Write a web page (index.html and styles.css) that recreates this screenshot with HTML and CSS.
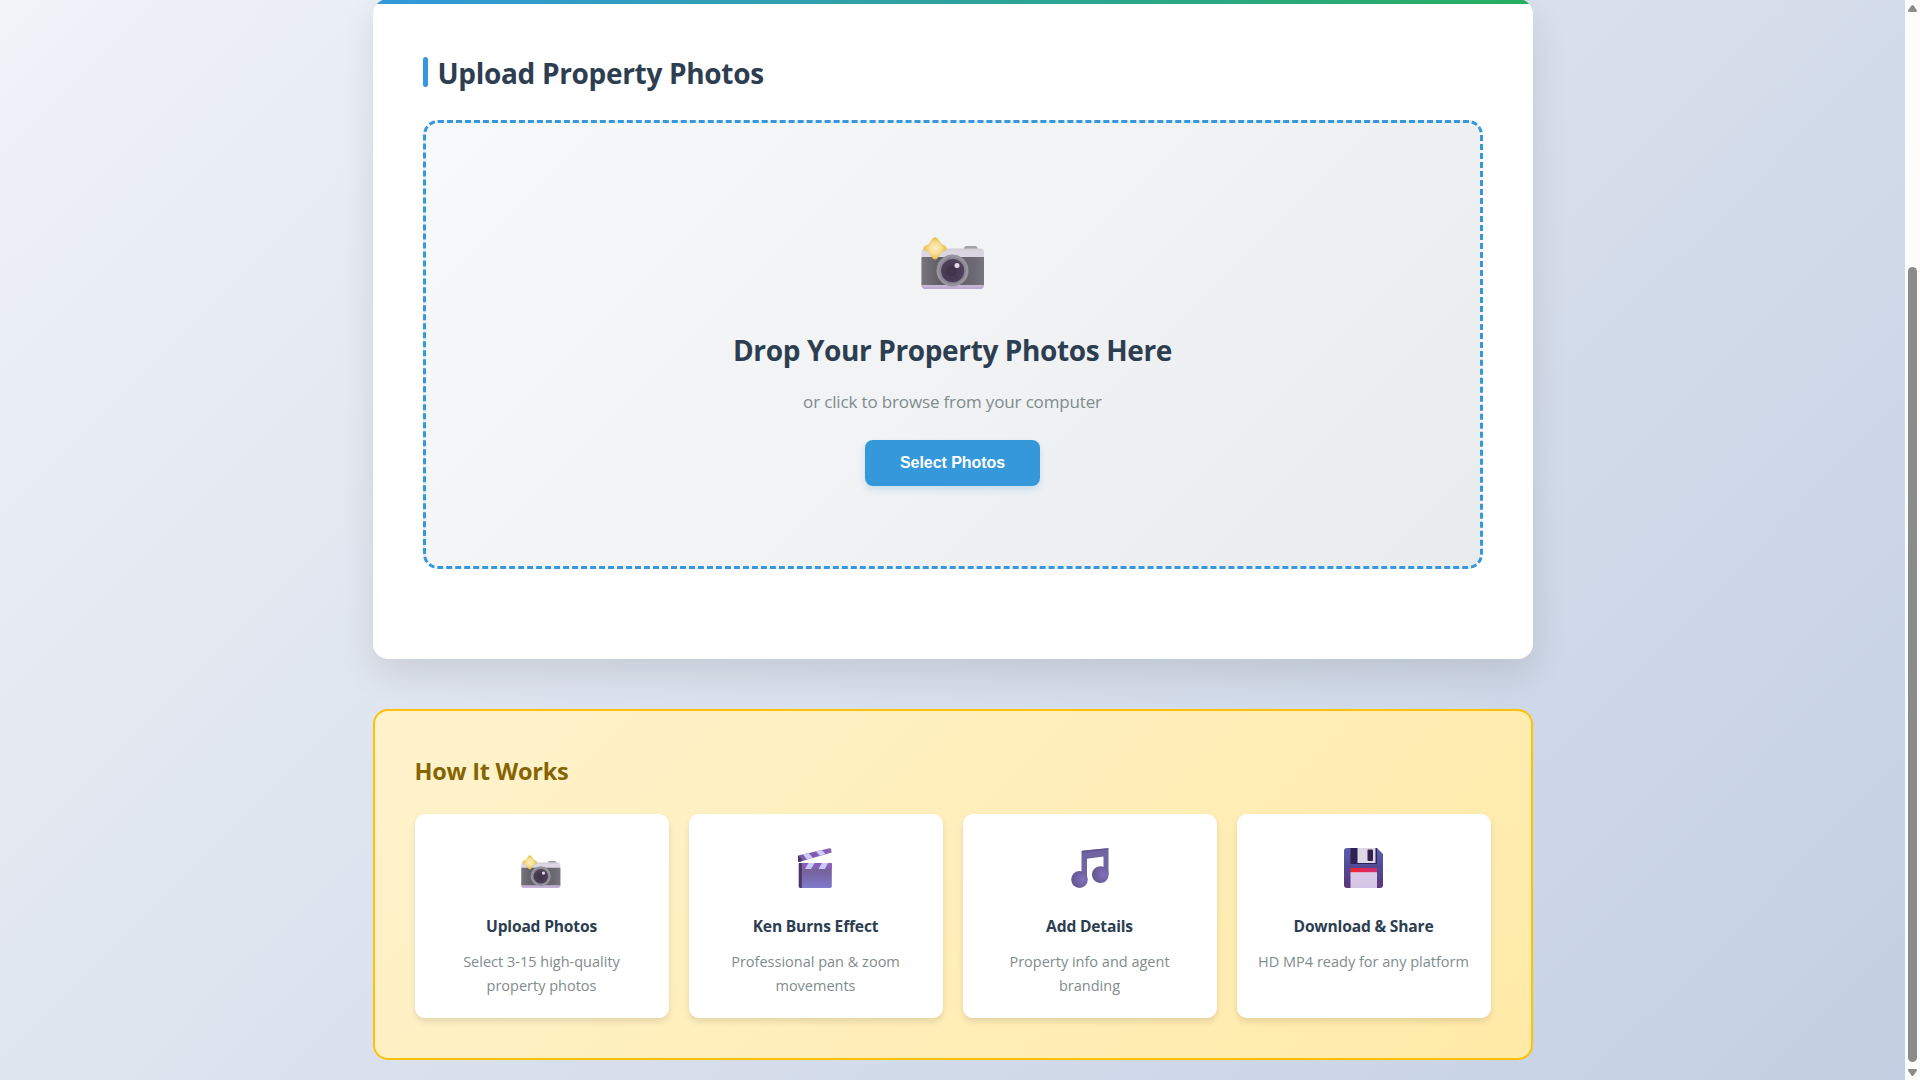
FILE: index.html
```html
<!DOCTYPE html>
<html lang="en">
<head>
<meta charset="utf-8">
<title>Property Video Maker</title>
<link rel="stylesheet" href="styles.css">
</head>
<body>
<svg class="defs" width="0" height="0" aria-hidden="true">
  <defs>
    <linearGradient id="camBody" x1="0" y1="0" x2="1" y2="0"><stop offset="0" stop-color="#77757b"/><stop offset=".3" stop-color="#5f5d63"/><stop offset=".85" stop-color="#6b6971"/><stop offset="1" stop-color="#77757d"/></linearGradient>
    <linearGradient id="camTop" x1="0" y1="0" x2="0" y2="1"><stop offset="0" stop-color="#d0ccd4"/><stop offset=".08" stop-color="#dcd5e4"/><stop offset="1" stop-color="#d8cfe3"/></linearGradient>
    <linearGradient id="camBase" x1="0" y1="0" x2="0" y2="1"><stop offset="0" stop-color="#d4c2e6"/><stop offset="1" stop-color="#b8a5cd"/></linearGradient>
    <radialGradient id="camLens" cx=".45" cy=".55" r=".55"><stop offset="0" stop-color="#5d5068"/><stop offset=".5" stop-color="#463a51"/><stop offset="1" stop-color="#51445e"/></radialGradient>
    <radialGradient id="spark"><stop offset="0" stop-color="#ffebc5"/><stop offset=".5" stop-color="#f8df95"/><stop offset="1" stop-color="#e5bd3e"/></radialGradient>
    <linearGradient id="clapBody" x1="0" y1="0" x2="0" y2="1"><stop offset="0" stop-color="#7b6190"/><stop offset=".4" stop-color="#7664a0"/><stop offset="1" stop-color="#807bce"/></linearGradient>
    <linearGradient id="clapBar" x1="0" y1="0" x2="1" y2="0"><stop offset="0" stop-color="#7a58a2"/><stop offset="1" stop-color="#8a61b6"/></linearGradient>
    <radialGradient id="noteHead" cx=".7" cy=".5" r=".7"><stop offset="0" stop-color="#8171bd"/><stop offset="1" stop-color="#63568f"/></radialGradient>
    <linearGradient id="disk" x1="0" y1="0" x2="0" y2="1"><stop offset="0" stop-color="#5b5fae"/><stop offset=".5" stop-color="#514992"/><stop offset="1" stop-color="#5b3677"/></linearGradient>
    <linearGradient id="diskRed" x1="0" y1="0" x2="1" y2="0"><stop offset="0" stop-color="#ef2430"/><stop offset="1" stop-color="#ce2d77"/></linearGradient>
    <linearGradient id="diskLabel" x1="0" y1="0" x2="0" y2="1"><stop offset="0" stop-color="#dccbe6"/><stop offset="1" stop-color="#d3c6e6"/></linearGradient>
    <symbol id="camera" viewBox="0 0 64 52">
      <rect x="43" y="9" width="13.500" height="6" rx="2.500" fill="#a1a1a5"/>
      <rect x=".5" y="11.500" width="62.500" height="40.500" rx="4" fill="url(#camTop)"/>
      <path d="M.5 46h62.500v2a4 4 0 0 1-4 4h-54.500a4 4 0 0 1-4-4z" fill="url(#camBase)"/>
      <rect x=".5" y="20" width="62.500" height="28" fill="url(#camBody)"/>
      <circle cx="31.500" cy="33.500" r="16" fill="#98959e"/>
      <circle cx="31.500" cy="33.500" r="13.500" fill="#8b8792"/>
      <circle cx="31.700" cy="33.700" r="11.600" fill="url(#camLens)"/>
      <circle cx="30.500" cy="34.500" r="5" fill="#342a3e" opacity=".6"/>
      <circle cx="36" cy="28.500" r="2.500" fill="#e2dbe9"/>
      <path d="M11.800 1.300Q14 -1 16.200 1.300L20 6Q20.800 7 22 7.600L24.500 9.300Q26.600 11.200 24.500 13.200L20.500 16Q19.500 16.800 18.800 18L16.200 21.500Q14 23.600 11.800 21.500L9 17.500Q8.200 16.300 7 15.500L3.500 13.200Q1.400 11.200 3.500 9.300L7 7.200Q8 6.500 8.800 5.400Z" fill="url(#spark)"/>
    </symbol>
    <symbol id="clapper" viewBox="0 0 34 40">
      <path d="M0 7.500L31.500.2q1.200-.2 1.500 1l.7 3.200L1 14Q0 13.500 0 12.500z" fill="url(#clapBar)"/>
      <path d="M5 6.300l5.800-1.300 4 4.900-6 1.700zM18 3.300l5.800-1.300 3.900 4.100-6 1.700z" fill="#cdc9ff"/>
      <path d="M0 7.500l4 3.800-.3 2L1 14Q0 13.500 0 12.500z" fill="#4b375f"/>
      <rect x=".8" y="15" width="33" height="25" rx="1.800" fill="url(#clapBody)"/>
      <path d="M3.500 15h30.300v6H3.500z" fill="#8660b7"/>
      <path d="M10.500 15h6.200l-3.700 6H7zM24 15h6.200l-3.500 6h-6.200z" fill="#cdc9ff"/>
      <path d="M.8 15h3v25H2.600Q.8 40 .8 38.200z" fill="#4b375f"/>
    </symbol>
    <symbol id="note" viewBox="0 0 38 40">
      <path d="M10.500 4q0-1.200 1.200-1.400L36.500.2q1 0 1 1V27h-5V8.500L16 10.700V32h-5.500z" fill="#7064a2"/>
      <path d="M10.800 3.300Q24 1 37.500.2v1.200L11 4.800z" fill="#60558c"/>
      <ellipse cx="8.500" cy="31.500" rx="8.300" ry="8.400" fill="url(#noteHead)"/>
      <path d="M37.500 24v3c0 4.500-3.600 8-8.200 8S21 31.300 21 26.600s3.700-8.400 8.300-8.400c1.300 0 2.300.2 3.200.6z" fill="url(#noteHead)"/>
    </symbol>
    <symbol id="floppy" viewBox="0 0 39 40">
      <path d="M3 0h30l6 6v31q0 3-3 3H3q-3 0-3-3V3q0-3 3-3z" fill="url(#disk)"/>
      <path d="M6.500 0h26.500v16H6.500z" fill="#2e2153"/>
      <path d="M13.500 0h18v15h-18z" fill="#ded7e6"/>
      <rect x="23.500" y="1.500" width="5.500" height="11.500" rx="1" fill="#34204f"/>
      <path d="M6.500 24h26.500v16H6.500z" fill="url(#diskLabel)"/>
      <path d="M6.500 20h26.500v4.200H6.500z" fill="url(#diskRed)"/>
    </symbol>
  </defs>
</svg>
<div class="viewport">
  <main class="page">
    <section class="upload-card">
      <h2 class="section-title"><span class="section-title-text">Upload Property Photos</span></h2>
      <div class="dropzone">
        <div class="dropzone-icon"><svg class="camera-large"><use href="#camera"/></svg></div>
        <h3 class="dropzone-title">Drop Your Property Photos Here</h3>
        <p class="dropzone-text">or click to browse from your computer</p>
        <button class="select-button" type="button">Select Photos</button>
      </div>
    </section>
    <section class="how">
      <h3 class="how-title">How It Works</h3>
      <div class="steps">
        <article class="step">
          <div class="step-icon"><svg class="camera-small"><use href="#camera"/></svg></div>
          <h4 class="step-title">Upload Photos</h4>
          <p class="step-text">Select 3-15 high-quality<br>property photos</p>
        </article>
        <article class="step">
          <div class="step-icon"><svg class="clapper"><use href="#clapper"/></svg></div>
          <h4 class="step-title">Ken Burns Effect</h4>
          <p class="step-text">Professional pan &amp; zoom<br>movements</p>
        </article>
        <article class="step">
          <div class="step-icon"><svg class="note"><use href="#note"/></svg></div>
          <h4 class="step-title">Add Details</h4>
          <p class="step-text">Property info and agent<br>branding</p>
        </article>
        <article class="step">
          <div class="step-icon"><svg class="floppy"><use href="#floppy"/></svg></div>
          <h4 class="step-title">Download &amp; Share</h4>
          <p class="step-text">HD MP4 ready for any platform</p>
        </article>
      </div>
    </section>
  </main>
  <aside class="scrollbar" aria-hidden="true">
    <svg class="arrow" viewBox="0 0 9 7"><path d="M4.500 0Q5 0 5.500.6L8.800 5.300Q9.300 7 8 7H1Q-.3 7 .2 5.300L3.500.6Q4 0 4.500 0z"/></svg>
    <div class="thumb"></div>
    <svg class="arrow arrow-down" viewBox="0 0 9 7"><path d="M4.500 0Q5 0 5.500.6L8.800 5.300Q9.300 7 8 7H1Q-.3 7 .2 5.300L3.500.6Q4 0 4.500 0z"/></svg>
  </aside>
</div>
</body>
</html>
```
FILE: styles.css
```css
* { box-sizing: border-box; margin: 0; padding: 0; }

body {
  height: 1080px;
  overflow: hidden;
  font-family: "Open Sans", "Noto Sans", sans-serif;
  color: #2c3e50;
}

.defs { display: block; width: 0; height: 0; }

.viewport {
  display: grid;
  grid-template-columns: 1fr 15px;
  height: 1080px;
  overflow: hidden;
}

.page {
  height: 1080px;
  overflow: hidden;
  background: linear-gradient(135deg, #f5f7fa 0%, #c3cfe2 100%) 0 100% / 100% 1428px no-repeat;
}

.upload-card {
  width: 1160px;
  height: 660px;
  margin: -1px auto 50px;
  padding: 50px;
  border-radius: 15px;
  background: linear-gradient(90deg, #3498db, #27ae60) 0 0 / 100% 5px no-repeat, #fff;
  box-shadow: 0 15px 35px rgba(0, 0, 0, .1);
}

.section-title {
  display: flex;
  align-items: center;
  gap: 10px;
  height: 46px;
  margin-bottom: 25px;
  font-size: 28px;
  font-weight: 700;
  line-height: 44px;
  letter-spacing: -.32px;
  white-space: nowrap;
}

.section-title::before {
  content: "";
  width: 5px;
  height: 30px;
  border-radius: 3px;
  background: #3498db;
}

.section-title-text { padding-top: 2px; }

.dropzone {
  display: flex;
  flex-direction: column;
  align-items: center;
  height: 449px;
  padding: 80px 40px;
  border: 3px dashed #3498db;
  border-radius: 15px;
  background: linear-gradient(135deg, #f8f9fa 0%, #e9ecef 100%);
}

.dropzone-icon {
  display: flex;
  align-items: center;
  justify-content: center;
  height: 102px;
  margin-bottom: 22px;
}

.camera-large { width: 64px; height: 52px; margin-top: 17px; }

.dropzone-title {
  margin-bottom: 15px;
  font-size: 28px;
  font-weight: 700;
  line-height: 46px;
  letter-spacing: -.37px;
  white-space: nowrap;
}

.dropzone-text {
  margin-bottom: 24px;
  color: #7f8c8d;
  font-size: 17px;
  line-height: 28px;
  letter-spacing: -.15px;
}

.select-button {
  width: 175px;
  height: 46px;
  border: 0;
  border-radius: 8px;
  background: #3498db;
  box-shadow: 0 4px 6px rgba(52, 152, 219, .2);
  color: #fff;
  font: 700 16px/46px "Liberation Sans", Arial, sans-serif;
  letter-spacing: -.05px;
}

.how {
  width: 1160px;
  height: 351px;
  margin: 0 auto;
  padding: 40px;
  border: 2px solid #ffc107;
  border-radius: 15px;
  background: linear-gradient(135deg, #fff3cd 0%, #ffeaa7 100%);
}

.how-title {
  height: 38px;
  margin-bottom: 25px;
  color: #856404;
  font-size: 23.5px;
  font-weight: 700;
  line-height: 40px;
  letter-spacing: -.25px;
}

.steps {
  display: grid;
  grid-template-columns: repeat(4, 1fr);
  gap: 20px;
}

.step {
  height: 204px;
  padding: 20px 10px;
  border-radius: 10px;
  background: #fff;
  box-shadow: 0 4px 6px rgba(0, 0, 0, .1);
  text-align: center;
}

.step-icon {
  display: flex;
  align-items: flex-end;
  justify-content: center;
  height: 54px;
  margin-bottom: 25px;
}

.camera-small { width: 40px; height: 33px; margin-right: 1px; }
.clapper { width: 34px; height: 40px; margin-right: 1px; }
.note { width: 38px; height: 40px; }
.floppy { width: 39px; height: 40px; }

.step-title {
  margin-bottom: 11px;
  font-size: 15.6px;
  font-weight: 700;
  line-height: 26px;
  letter-spacing: -.18px;
}

.step-text {
  color: #7f8c8d;
  font-size: 14.5px;
  line-height: 24px;
}

.scrollbar {
  display: flex;
  flex-direction: column;
  align-items: center;
  padding: 5px 0 4px;
  background: #fcfcfc;
}

.arrow { width: 9px; height: 7px; fill: #8b8b8b; }
.arrow-down { transform: rotate(180deg); }

.thumb {
  width: 9px;
  height: 795px;
  margin: 255px 0 7px;
  border-radius: 5px;
  background: #8b8b8b;
}
```
